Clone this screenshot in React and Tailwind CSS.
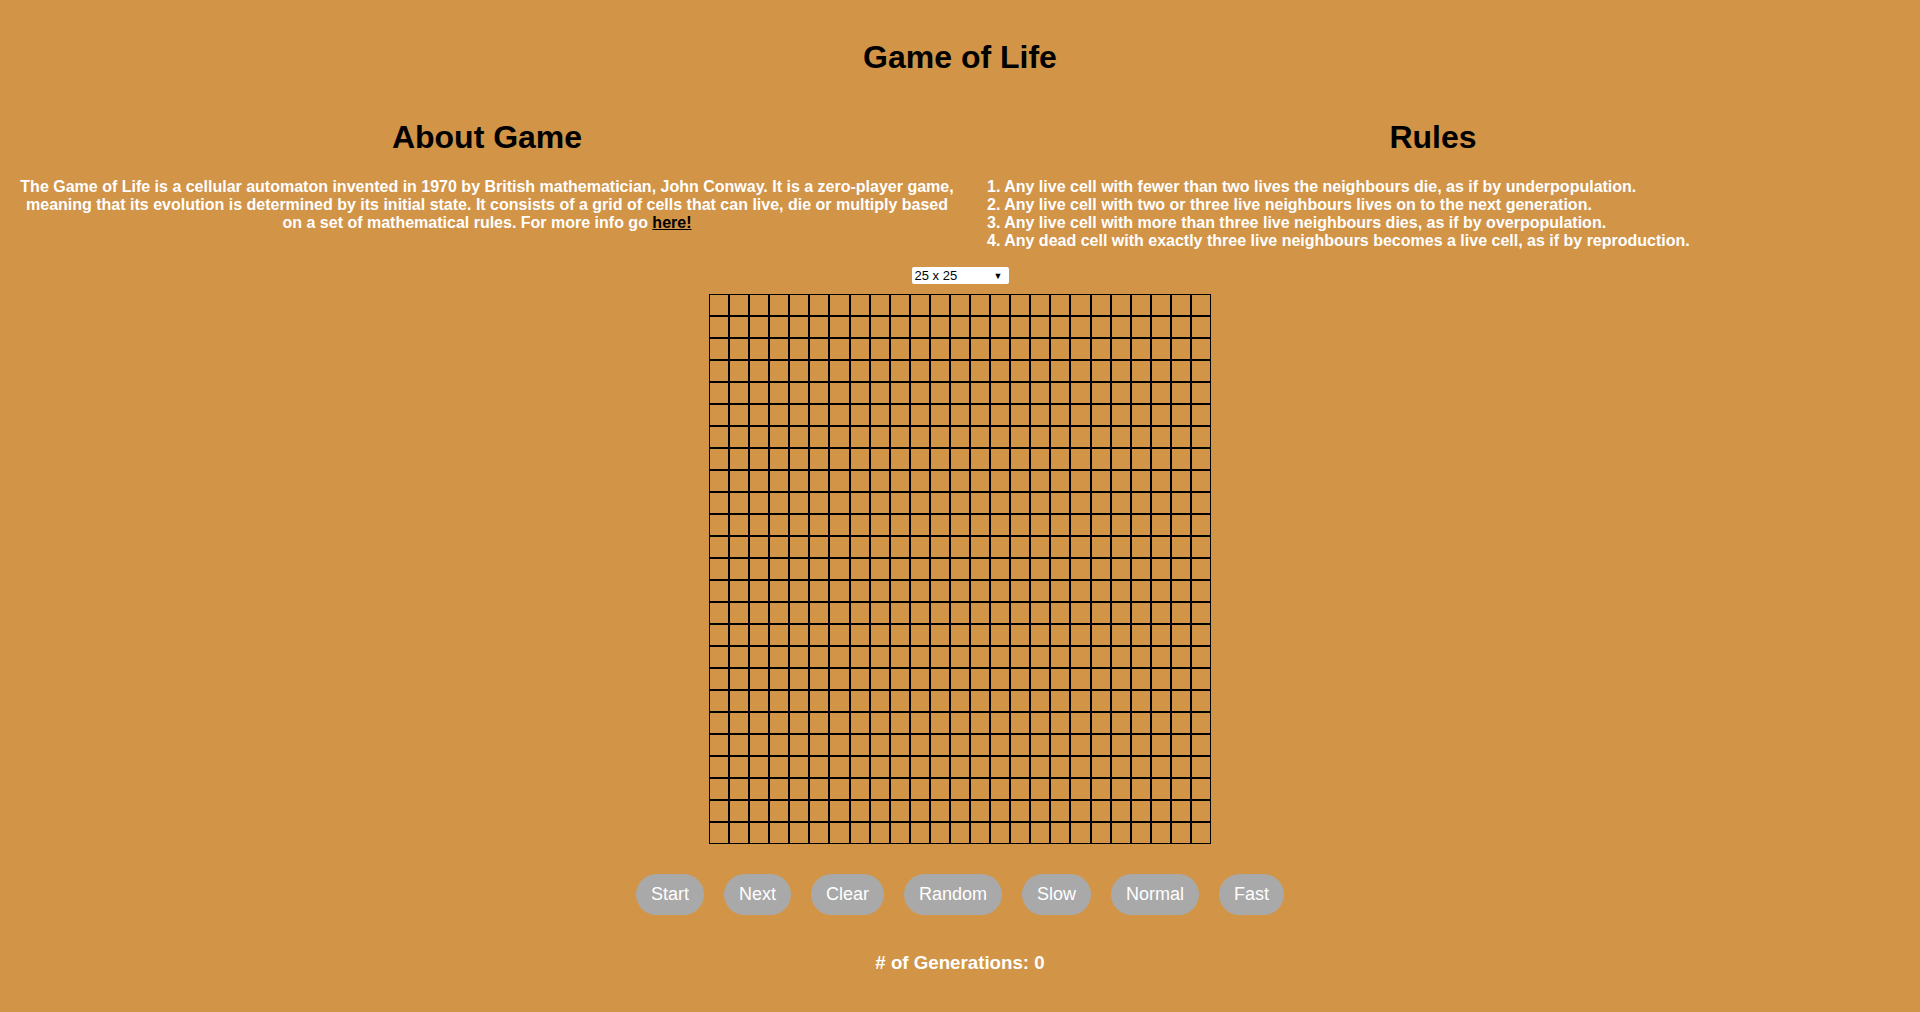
import React, { useState } from "react";

const SIZE = 25;

const rules = [
  "1. Any live cell with fewer than two lives the neighbours die, as if by underpopulation.",
  "2. Any live cell with two or three live neighbours lives on to the next generation.",
  "3. Any live cell with more than three live neighbours dies, as if by overpopulation.",
  "4. Any dead cell with exactly three live neighbours becomes a live cell, as if by reproduction.",
];

const buttons = ["Start", "Next", "Clear", "Random", "Slow", "Normal", "Fast"];

const App = () => {
  const [size] = useState("25 x 25");
  const [cells, setCells] = useState(() => Array(SIZE * SIZE).fill(false));
  const [generations] = useState(0);

  const toggle = (i) =>
    setCells((prev) => prev.map((c, j) => (j === i ? !c : c)));

  return (
    <div className="min-h-screen bg-[#d29447] pt-[39px] font-['Liberation_Sans',Arial,sans-serif] text-black">
      <h1 className="text-center text-[32px] font-bold leading-[37px]">
        Game of Life
      </h1>

      {/* About + Rules */}
      <div className="mt-[43px] flex">
        <section className="w-[974px] text-center">
          <h2 className="text-[32px] font-bold leading-[37px]">About Game</h2>
          <p className="mt-[22px] text-[16px] font-bold leading-[18px] text-white">
            The Game of Life is a cellular automaton invented in 1970 by British
            mathematician, John Conway. It is a zero-player game,
            <br />
            meaning that its evolution is determined by its initial state. It
            consists of a grid of cells that can live, die or multiply based
            <br />
            on a set of mathematical rules. For more info go{" "}
            <a href="#" className="text-black underline">
              here!
            </a>
          </p>
        </section>

        <section className="w-[918px]">
          <h2 className="text-center text-[32px] font-bold leading-[37px]">
            Rules
          </h2>
          <ul className="mt-[22px] pl-[13px] text-[16px] font-bold leading-[18px] text-white">
            {rules.map((r) => (
              <li key={r} className="whitespace-nowrap">
                {r}
              </li>
            ))}
          </ul>
        </section>
      </div>

      {/* Size selector */}
      <div className="mt-[17px] flex justify-center">
        <div className="flex h-[17px] w-[97px] items-center justify-between rounded-[2px] bg-white pl-[3px] pr-[6px] text-[13px] leading-[15px] text-black">
          <span>{size}</span>
          <span className="text-[9px] leading-[10px]">▼</span>
        </div>
      </div>

      {/* Board */}
      <div className="mt-[10px] flex justify-center">
        <div className="grid w-[502px] grid-cols-[repeat(25,1fr)]">
          {cells.map((alive, i) => (
            <div
              key={i}
              onClick={() => toggle(i)}
              className={`h-[22px] border border-black ${
                alive ? "bg-black" : ""
              }`}
            />
          ))}
        </div>
      </div>

      {/* Controls */}
      <div className="mt-[30px] flex justify-center gap-[20px]">
        {buttons.map((b) => (
          <button
            key={b}
            className="rounded-[21px] bg-[#a9a9a9] px-[15px] py-[10px] text-[18px] leading-[21px] text-white"
          >
            {b}
          </button>
        ))}
      </div>

      <h3 className="mt-[37px] text-center text-[18.72px] font-bold leading-[22px] text-white">
        # of Generations: {generations}
      </h3>
    </div>
  );
};

export default App;
